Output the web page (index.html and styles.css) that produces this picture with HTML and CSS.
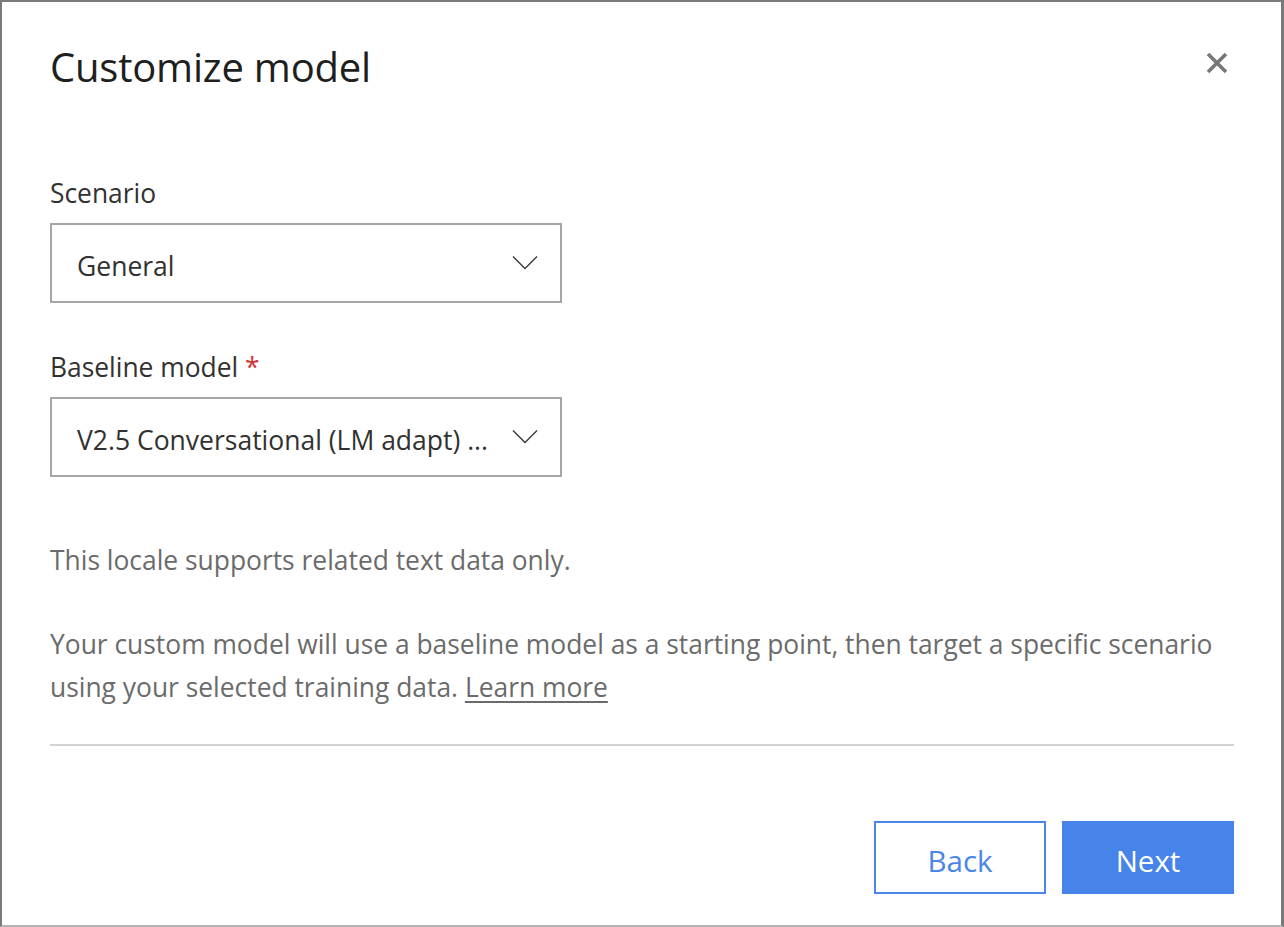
FILE: index.html
```html
<!DOCTYPE html>
<html lang="en">
<head>
<meta charset="utf-8">
<title>Customize model</title>
<link rel="stylesheet" href="styles.css">
</head>
<body>
<div class="dialog">
  <header class="dialog-header">
    <h1 class="dialog-title">Customize model</h1>
    <button class="close-btn" aria-label="Close">
      <svg width="22" height="22" viewBox="0 0 22 22"><path d="M2 2 L20 20 M20 2 L2 20" stroke="#767676" stroke-width="3.6" fill="none"/></svg>
    </button>
  </header>

  <div class="field field-first">
    <label class="field-label">Scenario</label>
    <div class="dropdown">
      <span class="dropdown-text">General</span>
      <svg class="chevron" width="26" height="15" viewBox="0 0 26 15"><path d="M1 1.5 L13 13.5 L25 1.5" stroke="#3a3a3a" stroke-width="1.4" fill="none"/></svg>
    </div>
  </div>

  <div class="field field-second">
    <label class="field-label">Baseline model <span class="required">*</span></label>
    <div class="dropdown">
      <span class="dropdown-text">V2.5 Conversational (LM adapt) ...</span>
      <svg class="chevron" width="26" height="15" viewBox="0 0 26 15"><path d="M1 1.5 L13 13.5 L25 1.5" stroke="#3a3a3a" stroke-width="1.4" fill="none"/></svg>
    </div>
  </div>

  <p class="note">This locale supports related text data only.</p>
  <p class="desc">Your custom model will use a baseline model as a starting point, then target a specific scenario using your selected training data. <a class="link" href="#">Learn more</a></p>

  <hr class="divider">

  <footer class="dialog-footer">
    <button class="btn btn-secondary">Back</button>
    <button class="btn btn-primary">Next</button>
  </footer>
</div>
</body>
</html>
```
FILE: styles.css
```css
* { box-sizing: border-box; }
html, body { margin: 0; padding: 0; background: #fff; }
body { font-family: "Open Sans", "Noto Sans", sans-serif; }

.dialog {
  width: 1284px;
  height: 927px;
  border-top: 2px solid #7a7a7a;
  border-left: 2px solid #7a7a7a;
  border-right: 3px solid #7a7a7a;
  border-bottom: 2px solid #b4b4b4;
  padding: 0 47px 0 48px;
  display: flex;
  flex-direction: column;
  background: #fff;
}

.dialog-header {
  display: flex;
  align-items: center;
  justify-content: space-between;
  padding-top: 41px;
  height: 89px;
}
.dialog-title {
  margin: 0;
  font-size: 40px;
  font-weight: 400;
  line-height: 48px;
  color: #201f1e;
  letter-spacing: -0.2px;
}
.close-btn {
  background: none;
  border: 0;
  padding: 0;
  margin-right: 6px;
  margin-top: -8px;
  width: 22px;
  height: 22px;
  display: flex;
}

.field { display: flex; flex-direction: column; }
.field-first { margin-top: 85px; }
.field-second { margin-top: 47px; }
.field-label {
  font-size: 26.4px;
  line-height: 34px;
  color: #323130;
  margin-bottom: 13px;
}
.required { color: #d13438; }

.dropdown {
  width: 512px;
  height: 80px;
  border: 2px solid #a6a6a6;
  display: flex;
  align-items: center;
  justify-content: space-between;
  padding: 0 22px 0 25px;
}
.dropdown-text {
  font-size: 26.5px;
  color: #323130;
  padding-top: 5px;
}
.chevron { display: block; margin-top: -2px; }

.note, .desc {
  margin: 0;
  font-size: 26.4px;
  line-height: 43px;
  color: #6b6b6b;
}
.note { margin-top: 62px; }
.desc { margin-top: 41px; }
.link { color: #6b6b6b; text-decoration: underline; text-underline-offset: 4px; }

.divider {
  margin: 35px 0 0 0;
  border: 0;
  height: 2px;
  background: #d2d2d2;
}

.dialog-footer {
  display: flex;
  justify-content: flex-end;
  gap: 16px;
  margin-top: 75px;
}
.btn {
  width: 172px;
  height: 73px;
  font-family: inherit;
  font-size: 29.5px;
  padding: 5px 0 0 0;
  cursor: pointer;
}
.btn-secondary {
  background: #fff;
  border: 2px solid #4a86e8;
  color: #4a86e8;
}
.btn-primary {
  background: #4684ea;
  border: 0;
  color: #fff;
}
```
